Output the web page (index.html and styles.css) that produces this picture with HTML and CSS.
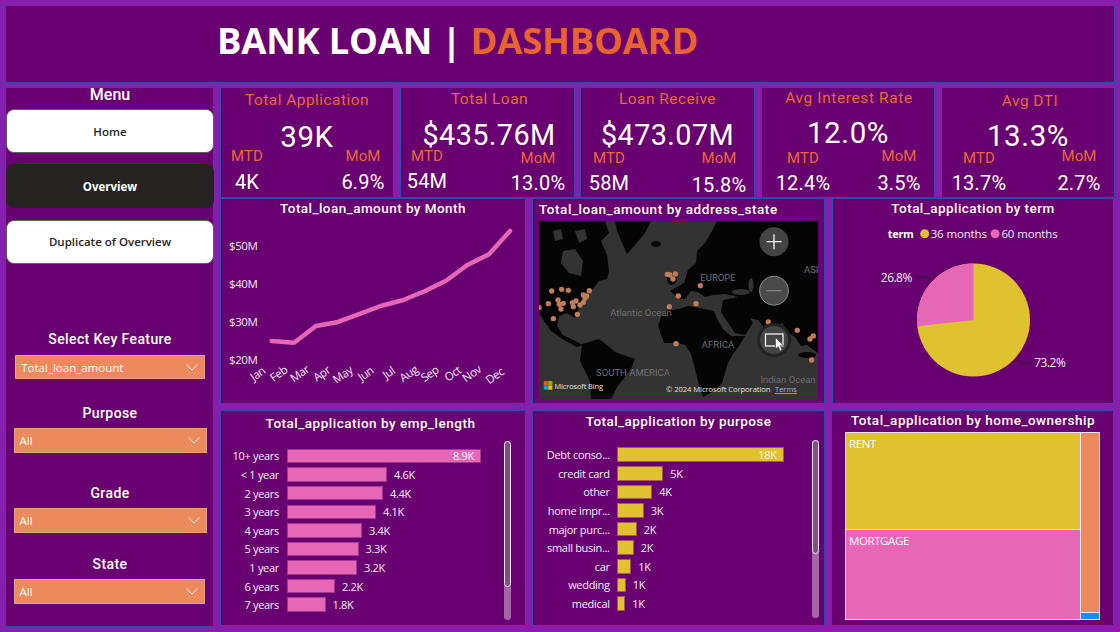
FILE: index.html
```html
<!DOCTYPE html>
<html lang="en">
<head>
<meta charset="utf-8">
<title>Bank Loan Dashboard</title>
<link rel="stylesheet" href="styles.css">
</head>
<body>
<div class="dash">
  <header class="panel header"><h1>BANK LOAN | <span class="accent">DASHBOARD</span></h1></header>
  <div class="content">
    <aside class="panel sidebar">
      <div class="menu-title">Menu</div>
      <button class="nav nav-light nav-first">Home</button>
      <button class="nav nav-dark">Overview</button>
      <button class="nav nav-light nav-last">Duplicate of Overview</button>
      <div class="filter filter-key">
        <div class="filter-label">Select Key Feature</div>
        <div class="dropdown dd-key"><span>Total_loan_amount</span><svg class="chev" viewBox="0 0 12 7"><polyline points="0.5,0.5 6,6 11.5,0.5"/></svg></div>
      </div>
      <div class="filter filter-purpose">
        <div class="filter-label">Purpose</div>
        <div class="dropdown"><span>All</span><svg class="chev" viewBox="0 0 12 7"><polyline points="0.5,0.5 6,6 11.5,0.5"/></svg></div>
      </div>
      <div class="filter filter-grade">
        <div class="filter-label">Grade</div>
        <div class="dropdown"><span>All</span><svg class="chev" viewBox="0 0 12 7"><polyline points="0.5,0.5 6,6 11.5,0.5"/></svg></div>
      </div>
      <div class="filter filter-state">
        <div class="filter-label">State</div>
        <div class="dropdown dd-state"><span>All</span><svg class="chev" viewBox="0 0 12 7"><polyline points="0.5,0.5 6,6 11.5,0.5"/></svg></div>
      </div>
    </aside>
    <main class="main">
      <section class="kpis">
        <article class="panel kpi k1">
          <div class="kpi-title">Total Application</div>
          <div class="kpi-value">39K</div>
          <div class="kpi-foot">
            <div class="kpi-col"><div class="kpi-label mtd">MTD</div><div class="kpi-num">4K</div></div>
            <div class="kpi-col"><div class="kpi-label mom">MoM</div><div class="kpi-num">6.9%</div></div>
          </div>
        </article>
        <article class="panel kpi k2">
          <div class="kpi-title">Total Loan</div>
          <div class="kpi-value">$435.76M</div>
          <div class="kpi-foot">
            <div class="kpi-col"><div class="kpi-label mtd">MTD</div><div class="kpi-num">54M</div></div>
            <div class="kpi-col"><div class="kpi-label mom">MoM</div><div class="kpi-num">13.0%</div></div>
          </div>
        </article>
        <article class="panel kpi k3">
          <div class="kpi-title">Loan Receive</div>
          <div class="kpi-value">$473.07M</div>
          <div class="kpi-foot">
            <div class="kpi-col"><div class="kpi-label mtd">MTD</div><div class="kpi-num">58M</div></div>
            <div class="kpi-col"><div class="kpi-label mom">MoM</div><div class="kpi-num">15.8%</div></div>
          </div>
        </article>
        <article class="panel kpi k4">
          <div class="kpi-title">Avg Interest Rate</div>
          <div class="kpi-value">12.0%</div>
          <div class="kpi-foot">
            <div class="kpi-col"><div class="kpi-label mtd">MTD</div><div class="kpi-num">12.4%</div></div>
            <div class="kpi-col"><div class="kpi-label mom">MoM</div><div class="kpi-num">3.5%</div></div>
          </div>
        </article>
        <article class="panel kpi k5">
          <div class="kpi-title">Avg DTI</div>
          <div class="kpi-value">13.3%</div>
          <div class="kpi-foot">
            <div class="kpi-col"><div class="kpi-label mtd">MTD</div><div class="kpi-num">13.7%</div></div>
            <div class="kpi-col"><div class="kpi-label mom">MoM</div><div class="kpi-num">2.7%</div></div>
          </div>
        </article>
      </section>

      <section class="charts-top">
        <article class="panel">
          <h2 class="chart-title">Total_loan_amount by Month</h2>
          <svg class="chart-svg line-svg" viewBox="221 219 304 184">
            <g class="axis-text">
              <text x="229" y="250">$50M</text>
              <text x="229" y="288">$40M</text>
              <text x="229" y="326">$30M</text>
              <text x="229" y="364">$20M</text>
            </g>
            <g class="axis-text month">
              <text transform="translate(260 377) rotate(-35)">Jan</text>
              <text transform="translate(281 377) rotate(-35)">Feb</text>
              <text transform="translate(302 377) rotate(-35)">Mar</text>
              <text transform="translate(324 377) rotate(-35)">Apr</text>
              <text transform="translate(345 378) rotate(-35)">May</text>
              <text transform="translate(368 377) rotate(-35)">Jun</text>
              <text transform="translate(391 376) rotate(-35)">Jul</text>
              <text transform="translate(411 377) rotate(-35)">Aug</text>
              <text transform="translate(432 377) rotate(-35)">Sep</text>
              <text transform="translate(455 377) rotate(-35)">Oct</text>
              <text transform="translate(474 377) rotate(-35)">Nov</text>
              <text transform="translate(497 379) rotate(-35)">Dec</text>
            </g>
            <polyline class="trend" points="271.7,341 294,342.7 316,326 336.7,322.3 358.3,314.3 380.7,306 403.3,300 425,291 446,280.7 467.3,265 489,254.3 510,231"/>
          </svg>
        </article>

        <article class="panel map-panel">
          <h2 class="chart-title map-title">Total_loan_amount by address_state</h2>
          <svg class="map" viewBox="0 0 279 178">
            <rect class="sea" width="279" height="178"/>
            <g class="land">
              <path d="M0,0 L66,0 L70,12 L62,20 L68,34 L70,50 L68,58 L60,60 L54,68 L47,72 L44,82 L38,90 L36,97 L28,92 L20,95 L18,105 L24,114 L36,120 L44,124 L38,126 L25,119 L12,110 L5,100 L0,92 Z"/>
              <path d="M76,0 L112,0 L106,12 L96,24 L88,33 L83,22 L78,10 Z"/>
              <ellipse cx="117" cy="23" rx="5" ry="3"/>
              <path d="M43,123 L60,118 L68,124 L76,131 L96,138 L92,148 L86,156 L78,166 L72,178 L52,178 L51,160 L41,140 Z"/>
              <path d="M119,105 L122,96 L127,90 L139,88 L150,85 L160,87 L175,90 L178,98 L184,108 L192,115 L206,115 L200,125 L194,133 L189,142 L186,152 L183,162 L175,170 L164,176 L160,164 L157,152 L152,133 L146,124 L139,122 L125,122 Z"/>
              <path d="M158,30 L166,22 L172,12 L178,0 L279,0 L279,132 L268,124 L262,125 L256,116 L250,112 L243,102 L238,106 L232,116 L226,108 L219,99 L211,97 L214,102 L206,114 L196,112 L189,102 L182,91 L184,79 L199,76 L186,73 L175,74 L166,76 L159,71 L152,70 L146,78 L140,78 L131,70 L145,62 L149,49 L157,42 Z"/>
              <ellipse cx="133" cy="58" rx="5" ry="6"/>
              <ellipse cx="268" cy="134" rx="9" ry="3"/>
            </g>
            <g class="sea-patch">
              <path d="M24,30 L36,28 L44,40 L42,55 L30,52 L22,42 Z"/>
              <path d="M14,10 L22,8 L24,18 L16,20 Z"/>
              <path d="M36,10 L46,8 L48,18 L40,22 Z"/>
              <ellipse cx="202" cy="71" rx="9" ry="3"/>
              <ellipse cx="212" cy="64" rx="2.5" ry="7"/>
              <path d="M160,10 L150,0 L178,0 L170,10 Z"/>
            </g>
            <g class="dots" transform="translate(-9 -26) scale(.3333)">
              <circle cx="65" cy="288" r="8"/><circle cx="95" cy="283" r="8"/><circle cx="115" cy="286" r="8"/><circle cx="55" cy="326" r="8"/><circle cx="84" cy="315" r="8"/><circle cx="88" cy="328" r="8"/><circle cx="100" cy="325" r="8"/><circle cx="93" cy="342" r="8"/><circle cx="70" cy="371" r="8"/><circle cx="27" cy="338" r="8"/><circle cx="178" cy="287" r="8"/><circle cx="160" cy="300" r="8"/><circle cx="170" cy="303" r="8"/><circle cx="165" cy="310" r="8"/><circle cx="127" cy="323" r="8"/><circle cx="138" cy="318" r="8"/><circle cx="130" cy="335" r="8"/><circle cx="150" cy="330" r="8"/><circle cx="160" cy="322" r="8"/><circle cx="142" cy="358" r="8"/><circle cx="412" cy="238" r="8"/><circle cx="420" cy="240" r="8"/><circle cx="436" cy="237" r="8"/><circle cx="429" cy="252" r="8"/><circle cx="511" cy="272" r="8"/><circle cx="445" cy="303" r="8"/><circle cx="418" cy="335" r="8"/><circle cx="498" cy="326" r="8"/><circle cx="438" cy="446" r="8"/><circle cx="715" cy="381" r="8"/><circle cx="802" cy="406" r="8"/><circle cx="840" cy="432" r="8"/><circle cx="850" cy="423" r="8"/><circle cx="845" cy="495" r="8"/>
            </g>
            <g class="map-text">
              <text x="102" y="95" text-anchor="middle">Atlantic Ocean</text>
              <text x="179" y="60" text-anchor="middle">EUROPE</text>
              <text x="179" y="127" text-anchor="middle">AFRICA</text>
              <text x="94" y="155" text-anchor="middle">SOUTH AMERICA</text>
              <text x="249" y="162" text-anchor="middle">Indian Ocean</text>
              <text x="265" y="52">ASI</text>
            </g>
            <circle class="map-btn" cx="235" cy="20.7" r="14.5"/>
            <path class="map-icon" d="M227.5 20.7h15M235 13.2v15"/>
            <circle class="map-btn map-btn-off" cx="235" cy="69.7" r="14.5"/>
            <path class="map-icon map-icon-off" d="M227.5 69.7h15"/>
            <circle class="map-ring" cx="235" cy="119" r="15.5"/>
            <rect class="map-icon" x="226.5" y="113" width="17.5" height="12"/>
            <path class="cursor" d="M236.500 116.500v11.500l2.700-2.400 2 4.400 1.900-.9-2-4.300h3.500z"/>
            <g class="ms-logo">
              <rect class="ms-r" x="4.700" y="160" width="4.200" height="4.200"/>
              <rect class="ms-g" x="9.200" y="160" width="4.200" height="4.200"/>
              <rect class="ms-b" x="4.700" y="164.500" width="4.200" height="4.200"/>
              <rect class="ms-y" x="9.200" y="164.500" width="4.200" height="4.200"/>
            </g>
            <text class="map-bing" x="15.500" y="168">Microsoft Bing</text>
            <text class="map-credit" x="127" y="171">© 2024 Microsoft Corporation</text>
            <text class="map-terms" x="236" y="171">Terms</text>
          </svg>
        </article>

        <article class="panel">
          <h2 class="chart-title">Total_application by term</h2>
          <svg class="chart-svg pie-svg" viewBox="833 219 281 184">
            <text class="legend-head" x="888" y="238">term</text>
            <circle class="c-yellow" cx="925" cy="233.500" r="4.500"/>
            <text class="legend-text" x="931" y="238">36 months</text>
            <circle class="c-pink" cx="995.700" cy="233.500" r="4.500"/>
            <text class="legend-text" x="1002" y="238">60 months</text>
            <circle class="c-yellow" cx="974" cy="320" r="56.700"/>
            <path class="c-pink" d="M974 320L917.700 326.400A56.700 56.700 0 0 1 974 263.300Z"/>
            <polyline class="leader" points="916,277 926.700,277 930,282.300"/>
            <polyline class="leader" points="1016.700,358.300 1021.700,363.300 1031.700,363.300"/>
            <text class="pie-label" x="881" y="281.500">26.8%</text>
            <text class="pie-label" x="1035" y="367">73.2%</text>
          </svg>
        </article>
      </section>

      <section class="charts-bottom">
        <article class="panel">
          <h2 class="chart-title title-low">Total_application by emp_length</h2>
          <div class="bars-body">
            <div class="bars bars-emp">
              <span class="cat">10+ years</span><div class="bar-cell"><div class="hbar pink" style="width:194px"><span class="inside">8.9K</span></div></div>
              <span class="cat">&lt; 1 year</span><div class="bar-cell"><div class="hbar pink" style="width:100px"></div><span class="val">4.6K</span></div>
              <span class="cat">2 years</span><div class="bar-cell"><div class="hbar pink" style="width:96px"></div><span class="val">4.4K</span></div>
              <span class="cat">3 years</span><div class="bar-cell"><div class="hbar pink" style="width:89px"></div><span class="val">4.1K</span></div>
              <span class="cat">4 years</span><div class="bar-cell"><div class="hbar pink" style="width:75px"></div><span class="val">3.4K</span></div>
              <span class="cat">5 years</span><div class="bar-cell"><div class="hbar pink" style="width:71.500px"></div><span class="val">3.3K</span></div>
              <span class="cat">1 year</span><div class="bar-cell"><div class="hbar pink" style="width:70px"></div><span class="val">3.2K</span></div>
              <span class="cat">6 years</span><div class="bar-cell"><div class="hbar pink" style="width:48px"></div><span class="val">2.2K</span></div>
              <span class="cat">7 years</span><div class="bar-cell"><div class="hbar pink" style="width:38.500px"></div><span class="val">1.8K</span></div>
            </div>
            <div class="scroll scroll-emp"><div class="thumb"></div></div>
          </div>
        </article>

        <article class="panel">
          <h2 class="chart-title title-mid">Total_application by purpose</h2>
          <div class="bars-body">
            <div class="bars bars-purpose">
              <span class="cat">Debt conso...</span><div class="bar-cell"><div class="hbar yellow" style="width:166.500px"><span class="inside">18K</span></div></div>
              <span class="cat">credit card</span><div class="bar-cell"><div class="hbar yellow" style="width:46px"></div><span class="val">5K</span></div>
              <span class="cat">other</span><div class="bar-cell"><div class="hbar yellow" style="width:35px"></div><span class="val">4K</span></div>
              <span class="cat">home impr...</span><div class="bar-cell"><div class="hbar yellow" style="width:26.500px"></div><span class="val">3K</span></div>
              <span class="cat">major purc...</span><div class="bar-cell"><div class="hbar yellow" style="width:19.500px"></div><span class="val">2K</span></div>
              <span class="cat">small busin...</span><div class="bar-cell"><div class="hbar yellow" style="width:16.500px"></div><span class="val">2K</span></div>
              <span class="cat">car</span><div class="bar-cell"><div class="hbar yellow" style="width:14px"></div><span class="val">1K</span></div>
              <span class="cat">wedding</span><div class="bar-cell"><div class="hbar yellow" style="width:8.500px"></div><span class="val">1K</span></div>
              <span class="cat">medical</span><div class="bar-cell"><div class="hbar yellow" style="width:6.500px"></div><span class="val">1K</span></div>
            </div>
            <div class="scroll scroll-purpose"><div class="thumb"></div></div>
          </div>
        </article>

        <article class="panel">
          <h2 class="chart-title title-tree">Total_application by home_ownership</h2>
          <div class="treemap">
            <div class="tree-cell tree-rent">RENT</div>
            <div class="tree-cell tree-mortgage">MORTGAGE</div>
            <div class="tree-cell tree-own"></div>
            <div class="tree-cell tree-other"></div>
          </div>
        </article>
      </section>
    </main>
  </div>
</div>
</body>
</html>
```
FILE: styles.css
```css
* { box-sizing: border-box; }
html, body { margin: 0; padding: 0; }
body {
  width: 1120px;
  height: 632px;
  overflow: hidden;
  background: #8520ae;
  font-family: Roboto, "Liberation Sans", sans-serif;
  color: #fff;
}
.dash {
  width: 1120px;
  height: 632px;
  padding: 5px 5px 0;
  display: flex;
  flex-direction: column;
  gap: 4px;
}
.panel {
  background: #690072;
  border: 1px solid #3348a8;
  min-width: 0;
}
.header {
  height: 78px;
  padding: 0 0 8px 211px;
  display: flex;
  align-items: center;
}
.header h1 {
  margin: 0;
  font-family: "Open Sans", sans-serif;
  font-weight: 700;
  font-size: 36.400px;
  line-height: 44px;
  letter-spacing: -0.2px;
  white-space: pre;
}
.accent { color: #e8642f; }
.content { display: flex; gap: 6px; }

/* Sidebar */
.sidebar {
  width: 209px;
  height: 540px;
  display: flex;
  flex-direction: column;
  align-items: stretch;
}
.menu-title {
  text-align: center;
  font-size: 16px;
  font-weight: 500;
  line-height: 14px;
  margin-bottom: 7px;
  padding-left: 1px;
}
.nav {
  height: 44px;
  border-radius: 8px;
  font-family: "Open Sans", sans-serif;
  font-size: 11.500px;
  font-weight: 600;
  padding: 0;
  margin: 0 -1px 0 0;
}
.nav-light { background: #fff; color: #252423; border: 1px solid #605e5c; }
.nav-dark { background: #252423; color: #fff; border: 0; font-weight: 700; margin-top: 11px; }
.nav-last { margin-top: 12px; padding-bottom: 2px; }
.filter { display: flex; flex-direction: column; align-items: center; }
.filter-key { margin-top: 66px; }
.filter-purpose { margin-top: 24.500px; }
.filter-grade { margin-top: 31px; }
.filter-state { margin-top: 22px; }
.filter-label {
  height: 18px;
  line-height: 18px;
  font-size: 14px;
  font-weight: 500;
  letter-spacing: 0.4px;
  margin: 0 0 6.500px 1px;
}
.dropdown {
  width: 193px;
  height: 24.500px;
  margin-left: 1px;
  background: #ec8a5e;
  border: 1px solid #dba28c;
  display: flex;
  align-items: center;
  justify-content: space-between;
  padding: 1px 6px 0 5px;
  font-family: "Open Sans", sans-serif;
  font-size: 11.500px;
}
.dd-key { width: 190px; margin-left: 1.500px; }
.dd-state { width: 191.500px; margin-left: -0.500px; }
.chev { width: 12px; height: 7px; fill: none; stroke: #fff; stroke-width: 1; }

/* KPI */
.main { display: flex; flex-direction: column; gap: 6px; width: 895px; }
.kpis {
  height: 105px;
  display: grid;
  grid-template-columns: 174px 175px 175px 174px 174px;
  column-gap: 6px;
}
.kpi {
  display: flex;
  flex-direction: column;
  padding-top: var(--top);
}
.k3, .k4, .k5 { margin: 0 1px 0 -1px; }
.kpi-title {
  text-align: center;
  color: #e8683a;
  font-size: 15.500px;
  letter-spacing: 0.45px;
  line-height: 19px;
}
.k2 .kpi-title, .k5 .kpi-title { padding-left: 4px; }
.k4 .kpi-title { letter-spacing: 0.6px; padding-left: 2px; }
.kpi-value {
  text-align: center;
  font-size: 29.500px;
  line-height: 36px;
  letter-spacing: 0.6px;
  margin-top: var(--gap);
}
.k2 .kpi-value, .k3 .kpi-value { font-size: 28.800px; letter-spacing: 0.4px; }
.k2 .kpi-value { padding-left: 3px; }
.kpi-foot {
  display: flex;
  justify-content: space-between;
  padding: 0 var(--px-r) 0 var(--px-l);
  margin-top: var(--foot);
}
.kpi-col { width: 50px; display: flex; flex-direction: column; align-items: center; white-space: nowrap; }
.kpi-label {
  color: #e8683a;
  font-size: 15px;
  line-height: 18px;
  letter-spacing: 0.1px;
}
.kpi-col .mtd { margin-top: var(--mtd); }
.kpi-col .mom { margin-top: var(--mom); }
.kpi-num {
  font-size: 20px;
  line-height: 24px;
  letter-spacing: 0.2px;
}
.mtd + .kpi-num { margin-top: var(--mtd-num); }
.mom + .kpi-num { margin-top: var(--mom-num); }
.k1 { --px-l: 1px;  --px-r: 5px;  --top: 3px; --gap: 9px; --foot: -8px; --mtd: 0px; --mom: 0px; --mtd-num: 5px; --mom-num: 5px; }
.k2 { --px-l: 1px;  --px-r: 11px; --top: 2px; --gap: 8px; --foot: -6px; --mtd: 0px; --mom: 2px; --mtd-num: 4px; --mom-num: 4px; }
.k3 { --px-l: 3px;  --px-r: 10px; --top: 2px; --gap: 8px; --foot: -4px; --mtd: 0px; --mom: 0px; --mtd-num: 4px; --mom-num: 6px; }
.k4 { --px-l: 16px; --px-r: 10px; --top: 1px; --gap: 7px; --foot: -2px; --mtd: 0px; --mom: -2px; --mtd-num: 4px; --mom-num: 6px; }
.k5 { --px-l: 12px; --px-r: 10px; --top: 4px; --gap: 7px; --foot: -5px; --mtd: 0px; --mom: -2px; --mtd-num: 4px; --mom-num: 6px; }

/* Charts */
.charts-top, .charts-bottom {
  display: grid;
  grid-template-columns: 306px 293px 283px;
  column-gap: 6px;
}
.charts-top { height: 206px; }
.charts-bottom { height: 216px; }
.charts-top > :last-child { margin-left: 1px; }
.chart-title {
  margin: 0;
  height: 20px;
  line-height: 18px;
  text-align: center;
  font-size: 13.500px;
  font-weight: 500;
  letter-spacing: 0.45px;
}
.chart-svg { display: block; width: 100%; height: 184px; }
.axis-text text {
  font-family: "Open Sans", sans-serif;
  font-size: 11.500px;
  letter-spacing: -0.4px;
  fill: #f6e6f8;
}
.month text { text-anchor: middle; }
.trend { fill: none; stroke: #e667b6; stroke-width: 4.500px; stroke-linecap: round; stroke-linejoin: round; }

/* Map */
.map-panel { display: flex; flex-direction: column; }
.map-title { text-align: left; padding-left: 6px; height: 22px; line-height: 20px; letter-spacing: 0.55px; }
.map { display: block; width: 279px; height: 178px; margin-left: 6px; }
.sea { fill: #333333; }
.land { fill: #050505; filter: blur(0.5px); }
.sea-patch { fill: #333333; filter: blur(0.6px); }
.dots { fill: #c17d57; }
.map-text text { font-family: Roboto, sans-serif; font-size: 9.500px; fill: #6f6f6f; }
.map-btn { fill: #444444; }
.map-btn-off { stroke: #8a8a8a; stroke-width: 1; fill: #4a4a4a; }
.map-ring { fill: #444444; stroke: #222222; stroke-width: 3; }
.map-icon { fill: none; stroke: #ffffff; stroke-width: 1.200px; }
.map-icon-off { stroke: #8a8a8a; }
.cursor { fill: #ffffff; stroke: #333333; stroke-width: 0.600px; }
.ms-r { fill: #f25022; }
.ms-g { fill: #7fba00; }
.ms-b { fill: #00a4ef; }
.ms-y { fill: #ffb900; }
.map-bing { font-family: "Open Sans", sans-serif; font-size: 7.400px; fill: #e2e2e2; letter-spacing: -0.1px; }
.map-credit { font-family: "Open Sans", sans-serif; font-size: 7.700px; fill: #e2e2e2; letter-spacing: -0.1px; }
.map-terms { font-family: "Open Sans", sans-serif; font-size: 7.500px; fill: #9db8ec; text-decoration: underline; }

/* Pie */
.legend-head { font-family: "Open Sans", sans-serif; font-size: 11px; font-weight: 700; letter-spacing: -0.3px; fill: #fff; }
.legend-text { font-family: "Open Sans", sans-serif; font-size: 11.500px; fill: #f8ecfa; letter-spacing: -0.1px; }
.c-yellow { fill: #e0c12f; }
.c-pink { fill: #e667b6; }
.leader { fill: none; stroke: #262626; stroke-width: 1px; }
.pie-label { font-family: "Open Sans", sans-serif; font-size: 12px; fill: #f8ecfa; letter-spacing: -0.5px; }

/* Bars */
.title-low { margin-top: 3px; padding-right: 5px; letter-spacing: 0.5px; }
.title-mid { margin-top: 1px; }
.title-tree { margin-top: 0; padding-left: 1px; letter-spacing: 0.5px; }
.bars-body { display: flex; justify-content: space-between; }
.bars {
  display: grid;
  grid-auto-rows: 18.600px;
  align-items: center;
  font-family: "Open Sans", sans-serif;
  font-size: 11px;
  letter-spacing: -0.3px;
  color: #f8ecfa;
}
.bars-emp { grid-template-columns: 58px 1fr; column-gap: 8px; padding-top: 12.700px; width: 280px; }
.bars-purpose { grid-template-columns: 76.700px 1fr; column-gap: 7.600px; padding-top: 13.400px; width: 270px; }
.cat { text-align: right; white-space: nowrap; }
.bar-cell { display: flex; align-items: center; gap: 7px; }
.hbar {
  height: 14.500px;
  border: 1px solid rgba(120, 20, 120, 0.6);
  display: flex;
  align-items: center;
  justify-content: flex-end;
  padding-right: 6px;
}
.pink { background: #e667b6; }
.yellow { background: #e0c12f; }
.inside { color: #fbeef5; }
.scroll { width: 7px; background: #a566a8; border-radius: 4px; }
.thumb {
  width: 100%;
  background: #7f5083;
  border: 1px solid #f2e8f4;
  border-radius: 4px;
}
.scroll-emp { height: 179px; margin: 7px 14px 0 0; }
.scroll-emp .thumb { height: 146px; }
.scroll-purpose { height: 178px; margin: 8px 5px 0 0; }
.scroll-purpose .thumb { height: 114px; }

/* Treemap */
.treemap {
  margin: 1px 13px 0 13px;
  height: 188px;
  display: grid;
  grid-template-columns: 1fr 18px;
  grid-template-rows: 96px 1fr 6px;
  gap: 1px;
  background: #f6e4f2;
  padding: 1px;
}
.tree-cell {
  padding: 3px 3px;
  font-family: "Open Sans", sans-serif;
  font-size: 11.500px;
  letter-spacing: -0.4px;
  line-height: 16px;
}
.tree-rent { background: #e0c12f; }
.tree-mortgage { background: #e667b6; grid-column: 1; grid-row: 2 / 4; }
.tree-own { background: #ec8a5e; grid-column: 2; grid-row: 1 / 3; }
.tree-other { background: #118dff; grid-column: 2; grid-row: 3; }
```
